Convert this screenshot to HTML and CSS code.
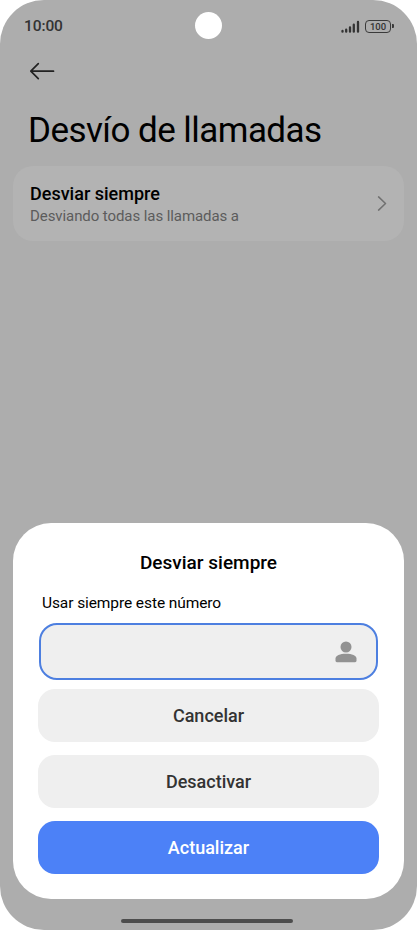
FILE: index.html
```html
<!DOCTYPE html>
<html lang="es">
  <head>
    <meta charset="UTF-8" />
    <meta name="viewport" content="width=device-width, initial-scale=1.0" />
    <title>Desvío de llamadas</title>
    <link rel="stylesheet" href="styles.css">
  </head>
  <body>
    <div class="phone">
      <div class="camera"></div>

      <header class="status">
        <span class="time">10:00</span>
        <div class="status-icons">
          <svg class="signal" width="19" height="13" viewBox="0 0 19 13">
            <path d="M1.5 11.700v-.8M5.200 11.700V9.700M9 11.700V7.300M12.800 11.700V4.700M17 11.700V1.900" />
          </svg>
          <div class="battery">100</div>
        </div>
      </header>

      <a href="#" class="back" aria-label="Atrás">
        <svg width="26" height="18" viewBox="0 0 26 18">
          <path d="M24.5 9.200H2M9.300 1.700L1.800 9.200l7.500 7.500" />
        </svg>
      </a>

      <h1>Desvío de llamadas</h1>

      <a href="#" class="card">
        <div>
          <h2>Desviar siempre</h2>
          <p>Desviando todas las llamadas a</p>
        </div>
        <svg width="10" height="16" viewBox="0 0 10 16">
          <path d="M1.600 .9L8.500 7.500l-6.900 6.600" />
        </svg>
      </a>

      <div class="sheet">
        <h2>Desviar siempre</h2>
        <label for="numero">Usar siempre este número</label>
        <div class="field">
          <input type="tel" id="numero" />
          <svg width="22" height="22" viewBox="0 0 22 22">
            <circle cx="11" cy="6" r="5.5" />
            <path d="M.5 17.600C.5 14.600 5 12.800 11 12.800s10.500 1.800 10.500 4.800v2.200q0 1.400-1.400 1.400H1.900Q.5 21.200.5 19.800z" />
          </svg>
        </div>
        <div class="buttons">
          <button type="button">Cancelar</button>
          <button type="button">Desactivar</button>
          <button type="button" class="primary">Actualizar</button>
        </div>
      </div>

      <div class="home-bar"></div>
    </div>
  </body>
</html>
```

FILE: styles.css
```css
* {
  box-sizing: border-box;
  margin: 0;
  padding: 0;
}

body {
  background-color: #fff;
  font-family: Roboto, "Liberation Sans", sans-serif;
  color: #000;
}

a {
  color: inherit;
  text-decoration: none;
}

svg {
  display: block;
  fill: none;
  stroke-linecap: round;
  stroke-linejoin: round;
}

.phone {
  position: relative;
  width: 417px;
  height: 930px;
  padding: 0 13px;
  background-color: #adadad;
  border-radius: 44px;
  overflow: hidden;
}

/* Status bar */
.camera {
  position: absolute;
  top: 12px;
  left: 195px;
  width: 27px;
  height: 27px;
  border-radius: 50%;
  background-color: #fff;
}

.status {
  display: flex;
  justify-content: space-between;
  align-items: center;
  height: 52px;
  padding: 0 10px 0 11px;
}

.time {
  font-size: 15.5px;
  font-weight: 500;
  letter-spacing: -0.1px;
  color: #333;
}

.status-icons {
  display: flex;
  align-items: center;
  gap: 5px;
}

.signal {
  stroke: #333;
  stroke-width: 2.3;
}

.battery {
  position: relative;
  width: 26px;
  height: 13px;
  margin-right: 3px;
  border: 1.5px solid #3a3a3a;
  border-radius: 4px;
  font-size: 9.5px;
  font-weight: 500;
  line-height: 11px;
  text-align: center;
  color: #333;
}

.battery::after {
  content: "";
  position: absolute;
  top: 3px;
  right: -4px;
  width: 2px;
  height: 4px;
  border-radius: 0 1px 1px 0;
  background-color: #3a3a3a;
}

/* Page */
.back {
  display: block;
  width: 26px;
  margin: 10px 0 0 16px;
}

.back svg {
  stroke: #222;
  stroke-width: 1.7;
}

h1 {
  margin: 29px 0 0 15px;
  font-size: 35px;
  font-weight: 400;
  line-height: 44px;
  letter-spacing: -0.55px;
  white-space: nowrap;
}

.card {
  display: flex;
  justify-content: space-between;
  align-items: center;
  height: 75px;
  margin-top: 13px;
  padding: 0 17px;
  border-radius: 20px;
  background-color: #b3b3b3;
}

.card h2 {
  font-size: 18px;
  font-weight: 500;
  line-height: 24px;
}

.card p {
  font-size: 15px;
  line-height: 20px;
  letter-spacing: -0.08px;
  color: #5c5c5c;
}

.card svg {
  stroke: #707070;
  stroke-width: 1.5;
}

/* Dialog */
.sheet {
  position: absolute;
  top: 523px;
  left: 13px;
  width: 391px;
  height: 376px;
  padding: 27px 25px 0;
  border-radius: 38px;
  background-color: #fff;
}

.sheet h2 {
  font-size: 19px;
  font-weight: 500;
  line-height: 26px;
  text-align: center;
}

.sheet label {
  display: block;
  margin: 16px 0 0 4px;
  font-size: 15.5px;
  line-height: 22px;
  letter-spacing: -0.09px;
}

.field {
  display: flex;
  align-items: center;
  height: 57px;
  margin: 9px 1px 0;
  padding-right: 19px;
  border: 2px solid #4d7fe0;
  border-radius: 18px;
  background-color: #efefef;
}

.field input {
  flex: 1;
  min-width: 0;
  height: 100%;
  padding-left: 16px;
  border: 0;
  outline: 0;
  background: none;
  font: inherit;
}

.field svg {
  fill: #929292;
}

.buttons {
  display: grid;
  gap: 12.5px;
  margin-top: 8.8px;
}

.buttons button {
  height: 53.4px;
  border: 0;
  border-radius: 17px;
  background-color: #efefef;
  font-family: inherit;
  font-size: 18px;
  font-weight: 500;
  color: #333;
}

.buttons .primary {
  background-color: #4c81f7;
  color: #fff;
}

.home-bar {
  position: absolute;
  bottom: 7px;
  left: 121px;
  width: 172px;
  height: 4px;
  border-radius: 2px;
  background-color: #4d4d4d;
}
```
